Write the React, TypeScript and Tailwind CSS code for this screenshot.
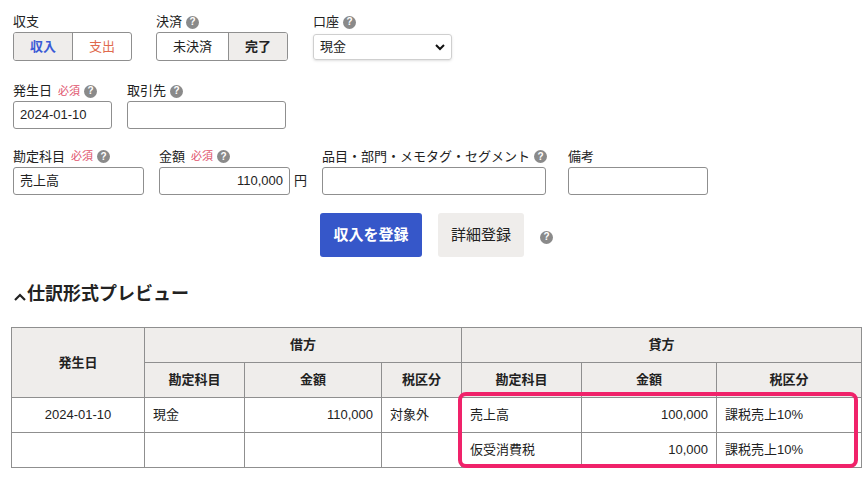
import React from 'react';

const Q = () => (
  <span className="inline-flex items-center justify-center w-[13px] h-[13px] rounded-full bg-[#8a8a8a] text-white text-[10px] font-bold leading-none ml-1">?</span>
);
const Req = () => <span className="text-[#e0526b] text-[11px] ml-1.5">必須</span>;

const Label: React.FC<{ children: React.ReactNode; w: string }> = ({ children, w }) => (
  <div className={`${w} flex flex-col`}>
    {children}
  </div>
);

const inputCls = 'h-[28px] border border-[#8f8f8f] rounded-[3px] bg-white px-1.5 flex items-center text-[13px]';

export default function App() {
  const th = 'border border-[#8f8f8f] bg-[#efedeb] font-bold text-[13px] text-center';
  const td = 'border border-[#8f8f8f] text-[13px] px-2';
  return (
    <div className="w-[868px] h-[481px] bg-white text-[#222] relative overflow-hidden" style={{ fontFamily: '"Liberation Sans","Noto Sans CJK JP",sans-serif' }}>
      <div className="pl-[13px] pt-[12px]">
        {/* row 1 */}
        <div className="flex">
          <Label w="w-[143px]">
            <div className="text-[13px] h-[20px]">収支</div>
            <div className="flex w-[119px] h-[29px] border border-[#8f8f8f] rounded-[3px] text-[13px] overflow-hidden">
              <div className="w-[59px] bg-[#efedeb] flex items-center justify-center text-[#3b5bd6] font-bold border-r border-[#8f8f8f]">収入</div>
              <div className="flex-1 flex items-center justify-center text-[#e06a4e]">支出</div>
            </div>
          </Label>
          <Label w="w-[157px]">
            <div className="text-[13px] h-[20px] flex items-center">決済<Q /></div>
            <div className="flex w-[132px] h-[29px] border border-[#8f8f8f] rounded-[3px] text-[13px] overflow-hidden">
              <div className="w-[72px] flex items-center justify-center border-r border-[#8f8f8f]">未決済</div>
              <div className="flex-1 bg-[#efedeb] flex items-center justify-center font-bold">完了</div>
            </div>
          </Label>
          <Label w="w-[140px]">
            <div className="text-[13px] h-[20px] flex items-center">口座<Q /></div>
            <div className="w-[139px] h-[26px] mt-[2px] border border-[#cfcfcf] rounded-[3px] shadow-sm flex items-center justify-between px-1.5 text-[13px]">
              現金
              <svg width="10" height="8" viewBox="0 0 10 8"><path d="M1 2l4 4 4-4" stroke="#111" strokeWidth="2" fill="none" /></svg>
            </div>
          </Label>
        </div>
        {/* row 2 */}
        <div className="flex mt-[20px]">
          <Label w="w-[114px]">
            <div className="text-[13px] h-[20px] flex items-center">発生日<Req /><Q /></div>
            <div className={`${inputCls} w-[99px]`}>2024-01-10</div>
          </Label>
          <Label w="w-[160px]">
            <div className="text-[13px] h-[20px] flex items-center">取引先<Q /></div>
            <div className={`${inputCls} w-[159px]`}></div>
          </Label>
        </div>
        {/* row 3 */}
        <div className="flex mt-[17px]">
          <Label w="w-[146px]">
            <div className="text-[13px] h-[21px] flex items-center">勘定科目<Req /><Q /></div>
            <div className={`${inputCls} w-[131px]`}>売上高</div>
          </Label>
          <Label w="w-[163px]">
            <div className="text-[13px] h-[21px] flex items-center">金額<Req /><Q /></div>
            <div className="flex items-center">
              <div className={`${inputCls} w-[131px] justify-end`}>110,000</div>
              <span className="text-[13px] ml-1">円</span>
            </div>
          </Label>
          <Label w="w-[246px]">
            <div className="text-[13px] h-[21px] flex items-center">品目・部門・メモタグ・セグメント<Q /></div>
            <div className={`${inputCls} w-[224px]`}></div>
          </Label>
          <Label w="w-[140px]">
            <div className="text-[13px] h-[21px] flex items-center">備考</div>
            <div className={`${inputCls} w-[140px]`}></div>
          </Label>
        </div>
        {/* buttons */}
        <div className="flex items-center mt-[18px] ml-[307px]">
          <div className="w-[102px] h-[44px] bg-[#3657c9] rounded-[3px] text-white font-bold text-[15px] flex items-center justify-center">収入を登録</div>
          <div className="w-[86px] h-[44px] bg-[#efedeb] rounded-[3px] text-[15px] flex items-center justify-center ml-[16px]">詳細登録</div>
          <span className="ml-[12px]"><Q /></span>
        </div>
        {/* heading */}
        <div className="mt-[24px] flex items-center text-[18px] font-bold">
          <svg width="14" height="12" viewBox="0 0 14 12" className="mt-1"><path d="M2 9l5-5 5 5" stroke="#222" strokeWidth="2.2" fill="none" /></svg>
          仕訳形式プレビュー
        </div>
      </div>
      {/* table */}
      <div className="absolute left-[11px] top-[327px]">
        <table className="border-collapse">
          <colgroup>
            <col className="w-[133px]" /><col className="w-[100px]" /><col className="w-[137px]" /><col className="w-[80px]" />
            <col className="w-[120px]" /><col className="w-[135px]" /><col className="w-[145px]" />
          </colgroup>
          <thead>
            <tr className="h-[35px]">
              <th rowSpan={2} className={th}>発生日</th>
              <th colSpan={3} className={th}>借方</th>
              <th colSpan={3} className={th}>貸方</th>
            </tr>
            <tr className="h-[35px]">
              <th className={th}>勘定科目</th><th className={th}>金額</th><th className={th}>税区分</th>
              <th className={th}>勘定科目</th><th className={th}>金額</th><th className={th}>税区分</th>
            </tr>
          </thead>
          <tbody>
            <tr className="h-[35px]">
              <td className={`${td} text-center`}>2024-01-10</td><td className={td}>現金</td>
              <td className={`${td} text-right`}>110,000</td><td className={td}>対象外</td>
              <td className={td}>売上高</td><td className={`${td} text-right`}>100,000</td><td className={td}>課税売上10%</td>
            </tr>
            <tr className="h-[35px]">
              <td className={td}></td><td className={td}></td><td className={td}></td><td className={td}></td>
              <td className={td}>仮受消費税</td><td className={`${td} text-right`}>10,000</td><td className={td}>課税売上10%</td>
            </tr>
          </tbody>
        </table>
      </div>
      <div className="absolute left-[458px] top-[392px] w-[400px] h-[76px] border-[4px] border-[#f0226a] rounded-[8px]"></div>
    </div>
  );
}
